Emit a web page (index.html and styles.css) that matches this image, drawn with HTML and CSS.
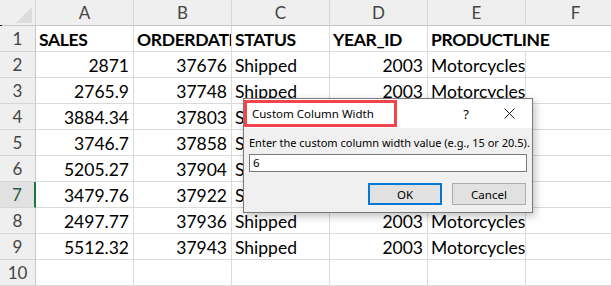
FILE: index.html
```html
<!DOCTYPE html>
<html>
<head>
<meta charset="utf-8">
<link rel="stylesheet" href="styles.css">
</head>
<body>
<div class="sheet">
  <div class="grid">
    <div class="corner"><span class="tri"></span></div>
    <div class="ch">A</div><div class="ch">B</div><div class="ch">C</div><div class="ch">D</div><div class="ch">E</div><div class="ch">F</div>

    <div class="rh">1</div><div class="c b">SALES</div><div class="c b">ORDERDATE</div><div class="c b">STATUS</div><div class="c b">YEAR_ID</div><div class="c b ov">PRODUCTLINE</div><div class="c"></div>
    <div class="rh">2</div><div class="c n">2871</div><div class="c n">37676</div><div class="c">Shipped</div><div class="c n">2003</div><div class="c">Motorcycles</div><div class="c"></div>
    <div class="rh">3</div><div class="c n">2765.9</div><div class="c n">37748</div><div class="c">Shipped</div><div class="c n">2003</div><div class="c">Motorcycles</div><div class="c"></div>
    <div class="rh">4</div><div class="c n">3884.34</div><div class="c n">37803</div><div class="c">Shipped</div><div class="c n">2003</div><div class="c">Motorcycles</div><div class="c"></div>
    <div class="rh">5</div><div class="c n">3746.7</div><div class="c n">37858</div><div class="c">Shipped</div><div class="c n">2003</div><div class="c">Motorcycles</div><div class="c"></div>
    <div class="rh">6</div><div class="c n">5205.27</div><div class="c n">37904</div><div class="c">Shipped</div><div class="c n">2003</div><div class="c">Motorcycles</div><div class="c"></div>
    <div class="rh sel">7</div><div class="c n">3479.76</div><div class="c n">37922</div><div class="c">Shipped</div><div class="c n">2003</div><div class="c">Motorcycles</div><div class="c"></div>
    <div class="rh">8</div><div class="c n">2497.77</div><div class="c n">37936</div><div class="c">Shipped</div><div class="c n">2003</div><div class="c">Motorcycles</div><div class="c"></div>
    <div class="rh">9</div><div class="c n">5512.32</div><div class="c n">37943</div><div class="c">Shipped</div><div class="c n">2003</div><div class="c">Motorcycles</div><div class="c"></div>
    <div class="rh">10</div><div class="c"></div><div class="c"></div><div class="c"></div><div class="c"></div><div class="c"></div><div class="c"></div>
  </div>
  <span class="tick"></span>

  <div class="dialog">
    <div class="titlebar">
      <span class="title">Custom Column Width</span>
      <span class="help">?</span>
      <svg class="close" width="11" height="11" viewBox="0 0 11 11"><path d="M0.5 0.5 L10.5 10.5 M10.5 0.5 L0.5 10.5" stroke="#1a1a1a" stroke-width="1"/></svg>
    </div>
    <div class="body">
      <div class="label">Enter the custom column width value (e.g., 15 or 20.5).</div>
      <div class="input">6</div>
      <div class="buttons">
        <div class="btn ok">OK</div>
        <div class="btn">Cancel</div>
      </div>
    </div>
    <div class="highlight"></div>
  </div>
</div>
</body>
</html>
```

FILE: styles.css
```css
html, body {
  margin: 0;
  padding: 0;
  background: #ffffff;
}
.sheet {
  position: relative;
  width: 611px;
  height: 286px;
  overflow: hidden;
  font-family: Lato, "Liberation Sans", sans-serif;
}
.grid {
  display: grid;
  grid-template-columns: 36px 98px 98px 98px 98px 98px 100px;
  grid-template-rows: repeat(11, 26px);
}
.corner, .ch, .rh {
  background: #efefef;
  color: #444444;
  box-sizing: border-box;
  border-right: 1px solid #d6d6d6;
  border-bottom: 1px solid #d6d6d6;
}
.corner {
  position: relative;
  border-bottom: 1px solid #c8c8c8;
}
.tri {
  position: absolute;
  right: 3px;
  bottom: 2px;
  width: 0;
  height: 0;
  border-left: 16px solid transparent;
  border-bottom: 16px solid #dcdcdc;
}
.ch {
  display: flex;
  align-items: center;
  justify-content: center;
  font-size: 17px;
  border-bottom: 1px solid #c8c8c8;
}
.rh {
  display: flex;
  align-items: center;
  justify-content: center;
  font-size: 17px;
  border-right: 1px solid #c8c8c8;
}
.rh.sel {
  background: #e1e1e1;
  color: #1d5e3c;
  border-right: 2px solid #217346;
}
.c {
  box-sizing: border-box;
  border-right: 1px solid #dadada;
  border-bottom: 1px solid #dadada;
  font-size: 17.5px;
  color: #000000;
  padding: 1px 3px 0 3px;
  display: flex;
  align-items: center;
  white-space: nowrap;
  overflow: hidden;
}
.c.b {
  font-weight: bold;
  letter-spacing: -0.35px;
}
.c.ov {
  overflow: visible;
  border-right-color: transparent;
}
.c.n {
  justify-content: flex-end;
  padding-right: 4px;
}
.tick {
  position: absolute;
  left: 0;
  top: 25px;
  width: 2px;
  height: 1px;
  background: #000;
}
.dialog {
  position: absolute;
  left: 243px;
  top: 98px;
  width: 290px;
  height: 115px;
  box-sizing: border-box;
  border: 1px solid #7a7a7a;
  background: #f0f0f0;
  box-shadow: 2px 3px 8px rgba(0,0,0,0.25);
  font-family: "Noto Sans", "Open Sans", sans-serif;
  font-size: 11px;
  color: #000;
}
.titlebar {
  height: 29px;
  background: #ffffff;
  display: flex;
  align-items: center;
  padding-left: 8px;
}
.title {
  flex: 1;
  font-size: 11.5px;
}
.help {
  font-size: 13px;
  margin-right: 35px;
}
.close {
  margin-right: 17px;
}
.body {
  padding: 6px 5px 0 5px;
}
.label {
  height: 18px;
  line-height: 18px;
  white-space: nowrap;
}
.input {
  margin-top: 2px;
  height: 18px;
  width: 278px;
  box-sizing: border-box;
  border: 1px solid #7a7a7a;
  background: #fff;
  padding-left: 3px;
  line-height: 16px;
  font-size: 11.5px;
}
.buttons {
  display: flex;
  justify-content: flex-end;
  gap: 10px;
  margin-top: 11px;
  padding-right: 1px;
}
.btn {
  width: 74px;
  height: 22px;
  box-sizing: border-box;
  border: 1px solid #adadad;
  background: #e1e1e1;
  display: flex;
  align-items: center;
  justify-content: center;
  font-size: 11.5px;
}
.btn.ok {
  border: 2px solid #0078d7;
}
.highlight {
  position: absolute;
  left: 0px;
  top: 1px;
  width: 153px;
  height: 27px;
  box-sizing: border-box;
  border: 3px solid #f0454d;
}
```
